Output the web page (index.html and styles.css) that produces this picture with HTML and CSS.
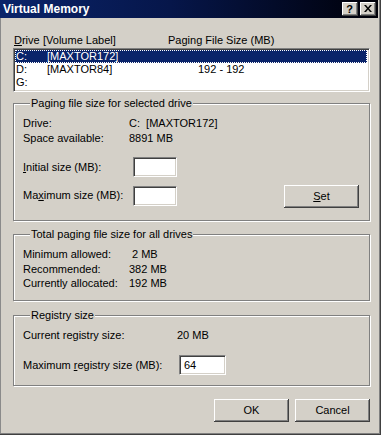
FILE: index.html
```html
<!DOCTYPE html>
<html>
<head>
<meta charset="utf-8">
<title>Virtual Memory</title>
<link rel="stylesheet" href="styles.css">
</head>
<body>
<div class="window">
  <div class="titlebar">
    <span class="title">Virtual Memory</span>
    <div class="tb-buttons">
      <span class="tb-btn help">?</span>
      <span class="tb-btn close">
        <svg width="8" height="7" viewBox="0 0 8 7"><path d="M0 0h2l2 2.5L6 0h2L5 3.5 8 7H6L4 4.5 2 7H0l3-3.5z" fill="#000"/></svg>
      </span>
    </div>
  </div>
  <div class="content">
    <div class="list-head">
      <span class="h-drive"><u>D</u>rive</span>
      <span class="h-label">[Volume Label]</span>
      <span class="h-size">Paging File Size (MB)</span>
    </div>
    <div class="listbox">
      <div class="row selected"><span class="c1">C:</span><span class="c2">[MAXTOR172]</span><span class="c3"></span></div>
      <div class="row"><span class="c1">D:</span><span class="c2">[MAXTOR84]</span><span class="c3">192 - 192</span></div>
      <div class="row"><span class="c1">G:</span><span class="c2"></span><span class="c3"></span></div>
    </div>

    <div class="group g1">
      <div class="legend">Paging file size for selected drive</div>
      <div class="info">
        <div class="info-row"><span class="k k1">Drive:</span><span class="v">C:&nbsp; [MAXTOR172]</span></div>
        <div class="info-row"><span class="k k1">Space available:</span><span class="v">8891 MB</span></div>
      </div>
      <div class="field-row initial">
        <span class="flabel f1"><u>I</u>nitial size (MB):</span>
        <span class="input w44"></span>
      </div>
      <div class="field-row maxrow">
        <span class="flabel f1">Ma<u>x</u>imum size (MB):</span>
        <span class="input w44 nudge"></span>
        <span class="btn set"><span><u>S</u>et</span></span>
      </div>
    </div>

    <div class="group g2">
      <div class="legend">Total paging file size for all drives</div>
      <div class="info">
        <div class="info-row"><span class="k k1">Minimum allowed:</span><span class="v ind">2 MB</span></div>
        <div class="info-row"><span class="k k1">Recommended:</span><span class="v">382 MB</span></div>
        <div class="info-row"><span class="k k1">Currently allocated:</span><span class="v">192 MB</span></div>
      </div>
    </div>

    <div class="group g3">
      <div class="legend">Registry size</div>
      <div class="info">
        <div class="info-row"><span class="k k3">Current registry size:</span><span class="v">20 MB</span></div>
      </div>
      <div class="field-row regrow">
        <span class="flabel f3">Maximum <u>r</u>egistry size (MB):</span>
        <span class="input w47"><span class="val">64</span></span>
      </div>
    </div>

    <div class="actions">
      <span class="btn"><span>OK</span></span>
      <span class="btn"><span>Cancel</span></span>
    </div>
  </div>
</div>
</body>
</html>
```

FILE: styles.css
```css
* { box-sizing: border-box; }
html, body { margin: 0; padding: 0; }
body {
  width: 381px;
  height: 435px;
  overflow: hidden;
  background: #d4d0c8;
  font-family: "Liberation Sans", Arial, sans-serif;
  font-size: 11px;
  color: #000;
}
u { text-decoration: underline; text-underline-offset: 1px; }

.window {
  width: 381px;
  height: 435px;
  background: #d4d0c8;
  box-shadow: inset -1px -1px #404040, inset -2px -2px #808080, inset 1px 0 #8a8a8a;
}

.titlebar {
  height: 18px;
  margin-right: 3px;
  background: linear-gradient(90deg, #0a246a 0%, #06164a 45%, #000008 100%);
  display: flex;
  align-items: center;
  padding: 0 2px 0 3px;
}
.title {
  flex: 1;
  color: #fff;
  font-weight: bold;
  font-size: 12px;
  line-height: 14px;
}
.tb-buttons { display: flex; gap: 2px; }
.tb-btn {
  width: 16px;
  height: 14px;
  background: #d4d0c8;
  box-shadow: inset -1px -1px #404040, inset 1px 1px #fff, inset -2px -2px #808080;
  display: flex;
  align-items: center;
  justify-content: center;
}
.help {
  font-weight: bold;
  font-size: 11px;
  line-height: 14px;
  padding-right: 1px;
}
.close svg { display: block; margin-top: -1px; }

.content { padding: 16px 11px 0 13px; }

.list-head {
  display: flex;
  height: 13px;
  line-height: 13px;
  padding-left: 1px;
}
.h-drive { width: 29px; }
.h-label { width: 125px; }

.listbox {
  margin-top: 1px;
  height: 44px;
  background: #fff;
  border: 1px solid;
  border-color: #808080 #fff #fff #808080;
  box-shadow: inset 1px 1px #404040, inset -1px -1px #d4d0c8;
  padding: 1px 1px 1px 1px;
}
.row {
  display: flex;
  height: 13px;
  line-height: 13px;
  padding-left: 1px;
  margin-right: 1px;
}
.row .c1 { width: 31px; }
.row .c2 { width: 151px; }
.row.selected {
  background: #0a246a;
  color: #fff;
  outline: 1px dotted #ffffff;
  outline-offset: -1px;
}

.group {
  border: 1px solid #808080;
  box-shadow: inset 1px 1px #fff, 1px 1px #fff;
  padding: 0 10px 0 9px;
}
.legend {
  width: fit-content;
  margin: -7px 0 0 7px;
  padding: 0 1px;
  background: #d4d0c8;
  height: 13px;
  line-height: 13px;
}
.info { margin-top: 6px; }
.info-row {
  display: flex;
  height: 14.5px;
  line-height: 14.5px;
  white-space: pre;
}
.k1 { width: 106px; }
.k3 { width: 154px; }
.v.ind { padding-left: 3px; }

.g1 { margin-top: 11px; padding-bottom: 12px; }
.g2 { margin-top: 13px; padding-bottom: 9.5px; }
.g3 { margin-top: 14px; padding-bottom: 10px; }

.field-row { display: flex; align-items: center; }
.flabel { line-height: 13px; }
.f1 { width: 110px; }
.f3 { width: 156px; }
.initial { margin-top: 12px; height: 20px; }
.maxrow { margin-top: 8px; height: 23px; align-items: flex-start; }
.maxrow .flabel { margin-top: 4px; }
.nudge { margin-top: 1px; }
.regrow { margin-top: 12.5px; height: 20px; }

.input {
  height: 20px;
  background: #fff;
  border: 1px solid;
  border-color: #808080 #fff #fff #808080;
  box-shadow: inset 1px 1px #404040, inset -1px -1px #d4d0c8;
  display: flex;
  align-items: center;
}
.w44 { width: 44px; }
.w47 { width: 47px; }
.val { padding-left: 4px; line-height: 13px; }

.btn {
  width: 75px;
  height: 23px;
  background: #d4d0c8;
  box-shadow: inset -1px -1px #404040, inset 1px 1px #fff, inset -2px -2px #808080, inset 2px 2px #d4d0c8;
  display: flex;
  align-items: center;
  justify-content: center;
  line-height: 13px;
}
.set { margin-left: auto; }

.actions {
  display: flex;
  justify-content: flex-end;
  gap: 6px;
  margin-top: 13px;
}
```
